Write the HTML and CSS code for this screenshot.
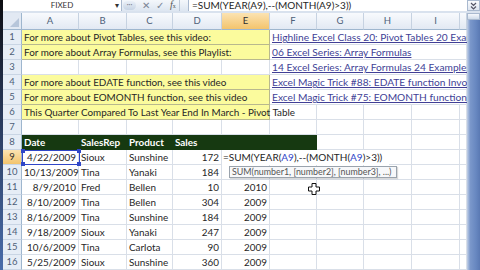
FILE: index.html
```html
<!DOCTYPE html>
<html lang="en">
<head>
    <meta charset="UTF-8">
    <meta name="viewport" content="width=device-width, initial-scale=1.0">
    <title>Excel - Date Functions</title>
    <link rel="stylesheet" href="styles.css">
</head>
<body>
<div class="app">
    <div class="edge"></div>
    <div class="window">
        <div class="formula-bar">
            <div class="namebox"><span class="nb-text">FIXED</span><span class="nb-arrow">&#9662;</span></div>
            <div class="fb-buttons">
                <span class="grip">&middot;&middot;&middot;</span>
                <span class="fb-x">&#10005;</span>
                <span class="fb-ok">&#10003;</span>
                <span class="fb-fx"><i>f</i><sub>x</sub></span>
            </div>
            <div class="fb-input">=SUM(YEAR(A9),--(MONTH(A9)&gt;3))</div>
            <div class="fb-expand">
                <svg width="7" height="8" viewBox="0 0 7 8"><path d="M1 1 L3.5 3.5 L6 1 M1 4.5 L3.5 7 L6 4.5" fill="none" stroke="#556" stroke-width="1.2"/></svg>
            </div>
        </div>
        <div class="main">
            <div class="sheet">
                <table class="grid">
                    <colgroup>
                        <col class="c-rh"><col class="c-a"><col class="c-b"><col class="c-c"><col class="c-d">
                        <col class="c-e"><col class="c-f"><col class="c-g"><col class="c-h"><col class="c-i"><col class="c-j">
                    </colgroup>
                    <tr class="colhdr">
                        <th class="corner"></th><th>A</th><th>B</th><th>C</th><th>D</th>
                        <th class="active">E</th><th>F</th><th>G</th><th>H</th><th>I</th><th></th>
                    </tr>
                    <tr>
                        <th>1</th>
                        <td colspan="5" class="note">For more about Pivot Tables, see this video:</td>
                        <td colspan="5" class="link"><a>Highline Excel Class 20: Pivot Tables 20 Examples</a></td>
                    </tr>
                    <tr>
                        <th>2</th>
                        <td colspan="5" class="note">For more about Array Formulas, see this Playlist:</td>
                        <td colspan="5" class="link"><a>06 Excel Series: Array Formulas</a></td>
                    </tr>
                    <tr>
                        <th>3</th>
                        <td></td><td></td><td></td><td></td><td></td>
                        <td colspan="5" class="link"><a>14 Excel Series: Array Formulas 24 Examples</a></td>
                    </tr>
                    <tr>
                        <th>4</th>
                        <td colspan="5" class="note">For more about EDATE function, see this video</td>
                        <td colspan="5" class="link"><a>Excel Magic Trick #88: EDATE function Invoice Due Date</a></td>
                    </tr>
                    <tr>
                        <th>5</th>
                        <td colspan="5" class="note">For more about EOMONTH function, see this video</td>
                        <td colspan="5" class="link"><a>Excel Magic Trick #75: EOMONTH function</a></td>
                    </tr>
                    <tr>
                        <th>6</th>
                        <td colspan="5" class="note">This Quarter Compared To Last Year End In March - Pivot Table</td>
                        <td></td><td></td><td></td><td></td><td></td>
                    </tr>
                    <tr>
                        <th>7</th>
                        <td></td><td></td><td></td><td></td><td></td><td></td><td></td><td></td><td></td><td></td>
                    </tr>
                    <tr>
                        <th>8</th>
                        <td class="hd">Date</td><td class="hd">SalesRep</td><td class="hd">Product</td><td class="hd">Sales</td>
                        <td class="hd"></td><td class="hd"></td><td></td><td></td><td></td><td></td>
                    </tr>
                    <tr>
                        <th class="active">9</th>
                        <td class="num">4/22/2009</td><td>Sioux</td><td>Sunshine</td><td class="num">172</td>
                        <td></td><td></td><td></td><td></td><td></td><td></td>
                    </tr>
                    <tr>
                        <th>10</th>
                        <td class="num">10/13/2009</td><td>Tina</td><td>Yanaki</td><td class="num">184</td>
                        <td></td><td></td><td></td><td></td><td></td><td></td>
                    </tr>
                    <tr>
                        <th>11</th>
                        <td class="num">8/9/2010</td><td>Fred</td><td>Bellen</td><td class="num">10</td>
                        <td class="num">2010</td><td></td><td></td><td></td><td></td><td></td>
                    </tr>
                    <tr>
                        <th>12</th>
                        <td class="num">8/10/2009</td><td>Tina</td><td>Bellen</td><td class="num">304</td>
                        <td class="num">2009</td><td></td><td></td><td></td><td></td><td></td>
                    </tr>
                    <tr>
                        <th>13</th>
                        <td class="num">8/16/2009</td><td>Tina</td><td>Sunshine</td><td class="num">184</td>
                        <td class="num">2009</td><td></td><td></td><td></td><td></td><td></td>
                    </tr>
                    <tr>
                        <th>14</th>
                        <td class="num">9/18/2009</td><td>Sioux</td><td>Yanaki</td><td class="num">247</td>
                        <td class="num">2009</td><td></td><td></td><td></td><td></td><td></td>
                    </tr>
                    <tr>
                        <th>15</th>
                        <td class="num">10/6/2009</td><td>Tina</td><td>Carlota</td><td class="num">90</td>
                        <td class="num">2009</td><td></td><td></td><td></td><td></td><td></td>
                    </tr>
                    <tr>
                        <th>16</th>
                        <td class="num">5/25/2009</td><td>Sioux</td><td>Sunshine</td><td class="num">360</td>
                        <td class="num">2009</td><td></td><td></td><td></td><td></td><td></td>
                    </tr>
                </table>

                <!-- range highlight for A9 while the formula is edited -->
                <div class="ref-box">
                    <span class="h tl"></span><span class="h tr"></span><span class="h bl"></span><span class="h br"></span>
                </div>
                <div class="edit-cell">=SUM(YEAR(<span class="ref">A9</span>),--(MONTH(<span class="ref">A9</span>)&gt;3))</div>
                <div class="tip">SUM(number1, [number2], [number3], ...)</div>
                <svg class="cursor" width="12" height="12" viewBox="0 0 12 12">
                    <polygon points="4,0.5 8,0.5 8,4 11.5,4 11.5,8 8,8 8,11.5 4,11.5 4,8 0.5,8 0.5,4 4,4" fill="#fff" stroke="#111" stroke-width="1"/>
                </svg>
            </div>
            <div class="vscroll">
                <div class="split"></div>
                <div class="thumb"></div>
            </div>
        </div>
    </div>
</div>
</body>
</html>
```

FILE: styles.css
```css
* {
    box-sizing: border-box;
}
body {
    margin: 0;
    width: 480px;
    height: 270px;
    overflow: hidden;
    font-family: Lato, "Liberation Sans", sans-serif;
    font-size: 9.9px;
    color: #262626;
    background: #fff;
}
.app {
    display: flex;
    height: 270px;
}
.edge {
    width: 3px;
    background: linear-gradient(#0c0c10, #24324f 35%, #4a6dab);
}
.window {
    flex: 1;
    display: flex;
    flex-direction: column;
    min-width: 0;
}

/* formula bar */
.formula-bar {
    height: 13px;
    display: flex;
    padding-bottom: 2px;
    background: #d9e2ee;
}
.namebox {
    width: 119px;
    background: #fff;
    border-right: 1px solid #a9b9cf;
    position: relative;
    text-align: center;
    font-size: 8px;
    line-height: 11px;
    color: #333;
}
.nb-arrow {
    position: absolute;
    right: 2px;
    top: 0;
    font-size: 8px;
    color: #333;
}
.fb-buttons {
    width: 66px;
    display: flex;
    align-items: center;
    gap: 6px;
    padding-left: 1px;
    background: linear-gradient(#f4f7fb, #dde6f1);
    color: #8a94a3;
    font-size: 10px;
    line-height: 11px;
}
.grip {
    width: 13px;
    height: 9px;
    border-radius: 5px;
    background: linear-gradient(#eaf0f8, #c6d3e4);
    font-size: 7px;
    line-height: 6px;
    text-align: center;
    color: #778;
}
.fb-x, .fb-ok {
    font-size: 10px;
    color: #7b8595;
}
.fb-fx {
    font-family: "Liberation Serif", serif;
    font-size: 10px;
    line-height: 10px;
    color: #555;
    border-right: 1px solid #bcc8d8;
    padding-right: 3px;
}
.fb-fx sub {
    font-size: 6px;
    vertical-align: 0;
}
.fb-input {
    flex: 1;
    background: #fff;
    border-left: 1px solid #a9b9cf;
    padding-left: 3px;
    font-size: 10px;
    line-height: 11px;
    white-space: nowrap;
    overflow: hidden;
}
.fb-expand {
    width: 13px;
    background: linear-gradient(#fafbfd, #dfe6f0);
    border: 1px solid #a9b9cf;
    display: flex;
    align-items: center;
    justify-content: center;
}

/* sheet */
.main {
    flex: 1;
    display: flex;
    min-height: 0;
}
.sheet {
    width: 464px;
    position: relative;
    overflow: hidden;
}
.grid {
    table-layout: fixed;
    border-collapse: separate;
    border-spacing: 0;
    width: 464px;
}
.c-rh { width: 19px; }
.c-a { width: 57px; }
.c-b { width: 48px; }
.c-c { width: 46px; }
.c-d { width: 49px; }
.c-e { width: 48px; }
.c-f { width: 47px; }
.c-g { width: 47px; }
.c-h { width: 48px; }
.c-i { width: 48px; }
.c-j { width: 7px; }

.grid td {
    height: 15px;
    padding: 0 2px;
    border-right: 1px solid #d9dfe8;
    border-bottom: 1px solid #d9dfe8;
    line-height: 14px;
    white-space: nowrap;
    overflow: visible;
}
.grid th {
    height: 15px;
    padding: 0;
    font-weight: normal;
    font-size: 9.5px;
    color: #4e5f78;
    background: #e6edf6;
    border-right: 1px solid #9eb6ce;
    border-bottom: 1px solid #c9d5e4;
    line-height: 14px;
    text-align: center;
}
.grid .colhdr th {
    height: 17px;
    line-height: 16px;
    background: linear-gradient(#f8fafd, #e2e9f3);
    border-right: 1px solid #c6d2e1;
    border-bottom: 1px solid #9eb6ce;
}
.grid th.active,
.grid .colhdr th.active {
    background: linear-gradient(#fbe3b2, #f3c46d);
    color: #2e2e2e;
}
.grid .colhdr th.corner {
    position: relative;
    background: #e2e9f3;
    border-right: 1px solid #9eb6ce;
}
.corner::after {
    content: "";
    position: absolute;
    right: 2px;
    bottom: 2px;
    border-left: 9px solid transparent;
    border-bottom: 9px solid #b7c6da;
}

.note {
    background: #fbfb9d;
    border-right-color: #b8b88e !important;
    border-bottom-color: #b8b88e !important;
}
.link a {
    font-size: 10.2px;
    color: #413f96;
    text-decoration: underline;
}
.hd {
    background: #163911;
    border-right-color: #163911 !important;
    border-bottom-color: #163911 !important;
    color: #fff;
    font-weight: bold;
}
.num {
    text-align: right;
}

/* overlays while editing E9 */
.ref-box {
    position: absolute;
    left: 19px;
    top: 137px;
    width: 58px;
    height: 15px;
    border: 1px solid #2f46c8;
}
.ref-box .h {
    position: absolute;
    width: 4px;
    height: 4px;
    background: #2f46c8;
}
.h.tl { left: -2px; top: -2px; }
.h.tr { right: -2px; top: -2px; }
.h.bl { left: -2px; bottom: -2px; }
.h.br { right: -2px; bottom: -2px; }

.edit-cell {
    position: absolute;
    left: 219px;
    top: 137px;
    width: 167px;
    height: 15px;
    padding-left: 1px;
    background: #fff;
    line-height: 14px;
    font-size: 10px;
    white-space: nowrap;
}
.ref {
    color: #2f46c8;
}
.tip {
    position: absolute;
    left: 226px;
    top: 153px;
    width: 168px;
    height: 12px;
    padding-left: 2px;
    background: #f7f8fa;
    border: 1px solid #9aa3ad;
    box-shadow: 1px 1px 1px rgba(0, 0, 0, 0.15);
    font-size: 8.9px;
    line-height: 10px;
    color: #555;
    white-space: nowrap;
    overflow: hidden;
}
.cursor {
    position: absolute;
    left: 305px;
    top: 170px;
}

/* right scrollbar */
.vscroll {
    width: 13px;
    display: flex;
    flex-direction: column;
    background: #dbe4f0;
}
.split {
    height: 7px;
    background: linear-gradient(#f5f8fc, #cfdbea);
    border: 1px solid #a9b9cf;
}
.thumb {
    flex: 1;
    background: linear-gradient(to right, #c1cfe6, #7b98cb 25%, #6787c0 70%, #5a79b3);
}
```
